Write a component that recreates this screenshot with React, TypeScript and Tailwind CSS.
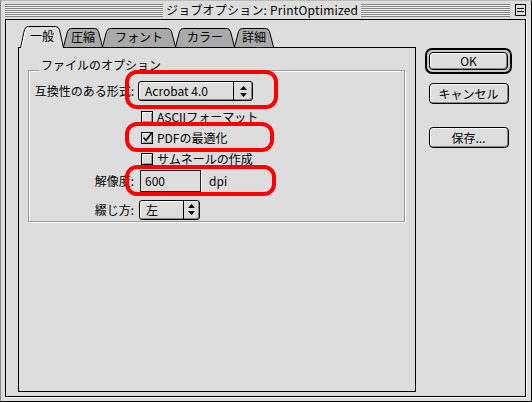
import React from "react";

const font = 'font-["Noto_Sans_CJK_JP",sans-serif]';

const tabs = [
  { label: "一般", w: 44, active: true },
  { label: "圧縮", w: 40 },
  { label: "フォント", w: 74 },
  { label: "カラー", w: 60 },
  { label: "詳細", w: 40 },
];

function Tab({ label, w, active, first }: { label: string; w: number; active?: boolean; first?: boolean }) {
  const h = active ? 22 : 19;
  const d = `M0.5 ${h} L4.5 3.5 Q5.5 0.5 8.5 0.5 L${w - 8.5} 0.5 Q${w - 5.5} 0.5 ${w - 4.5} 3.5 L${w - 0.5} ${h}`;
  return (
    <div
      className={`relative flex items-start justify-center ${first ? "" : "-ml-[1px]"} ${active ? "z-10 -mb-[1px] h-[22px] pt-[2px]" : "h-[19px] pt-[1px]"}`}
      style={{ width: w }}
    >
      <svg className="absolute inset-0" width={w} height={h}>
        <path d={d} fill={active ? "#dddddd" : "#a9a9a9"} stroke="#000" strokeWidth="1" />
        {active && <path d={`M1.8 ${h} L5.6 4 Q6.3 1.6 8.5 1.6`} fill="none" stroke="#fff" strokeWidth="1" />}
      </svg>
      <span className="relative whitespace-nowrap leading-[16px]">{label}</span>
    </div>
  );
}

function Popup({ text, w, arrowAt }: { text: string; w: number; arrowAt: number }) {
  return (
    <div
      className="flex h-[20px] items-center rounded-[3px] border border-black bg-[#dddddd] shadow-[inset_1px_1px_0_#fff,inset_-1px_-1px_0_#888]"
      style={{ width: w }}
    >
      <span className="whitespace-nowrap pl-[6px] leading-none" style={{ width: arrowAt }}>
        {text}
      </span>
      <div className="flex h-full flex-1 items-center justify-center border-l border-black">
        <svg width="7" height="11" viewBox="0 0 7 11">
          <polygon points="3.5,0 7,4 0,4" fill="#000" />
          <polygon points="0,7 7,7 3.5,11" fill="#000" />
        </svg>
      </div>
    </div>
  );
}

function Check({ label, checked }: { label: string; checked?: boolean }) {
  return (
    <div className="flex h-[21px] items-center">
      <span className="ml-[3px] relative h-[12px] w-[12px] border border-black bg-[#dddddd] shadow-[inset_1px_1px_0_#fff,inset_-1px_-1px_0_#999]">
        {checked && (
          <svg className="absolute left-[0px] top-[-1px]" width="11" height="11" viewBox="0 0 11 11">
            <path d="M1.5 5.5 L4 8.5 L9.5 1" fill="none" stroke="#000" strokeWidth="1.6" />
          </svg>
        )}
      </span>
      <span className="ml-[4px] whitespace-nowrap leading-none">{label}</span>
    </div>
  );
}

function Button({ label }: { label: string }) {
  return (
    <div className="flex h-[21px] w-[80px] items-center justify-center whitespace-nowrap rounded-[4px] border border-black bg-[#dddddd] leading-none shadow-[inset_1px_1px_0_#fff,inset_-1px_-1px_0_#888]">
      {label}
    </div>
  );
}

function Stripes({ className }: { className: string }) {
  return <div className={`h-[13px] bg-[repeating-linear-gradient(to_bottom,#868686_0px,#868686_1px,#eeeeee_1px,#eeeeee_2px)] ${className}`} />;
}

export default function App() {
  return (
    <div className={`${font} relative h-[402px] w-[532px] border-l border-t border-r border-b border-l-[#888] border-t-[#bbb] border-r-black border-b-black bg-[#dddddd] text-[12px] text-black`}>
      {/* タイトルバー */}
      <div className="flex h-[18px] items-center pl-[4px] pr-[5px]">
        <Stripes className="w-[158px]" />
        <span className="whitespace-nowrap px-[3px] leading-none tracking-[0.2px]">ジョブオプション: PrintOptimized</span>
        <Stripes className="flex-1" />
        <div className="ml-[5px] flex h-[12px] w-[11px] flex-col justify-center gap-[2px] border border-black bg-[#dddddd] px-[1px]">
          <div className="h-[1px] bg-black" />
          <div className="h-[1px] bg-black" />
        </div>
      </div>

      {/* 本体 */}
      <div className="ml-[4px] flex h-[378px] w-[521px] border border-black shadow-[1px_1px_0_#fff]">
        <div className="ml-[12px] mt-[6px] flex flex-col">
          <div className="ml-[2px] flex h-[21px] items-end">
            {tabs.map((t, i) => (
              <Tab key={t.label} label={t.label} w={t.w} active={t.active} first={i === 0} />
            ))}
          </div>
          <div className="h-[345px] w-[398px] border border-black">
            <div className="relative ml-[9px] mt-[22px] w-[377px] border border-[#999] pb-[2px] pl-[4px] shadow-[1px_1px_0_#fff,inset_1px_1px_0_#fff]">
              <span className="absolute left-[10px] top-[-13px] whitespace-nowrap bg-[#dddddd] px-[2px] leading-[14px]">ファイルのオプション</span>

              <div className="mt-[10px] flex h-[20px] items-center">
                <div className="w-[101px] whitespace-nowrap text-right leading-none">互換性のある形式:</div>
                <div className="ml-[4px]">
                  <Popup text="Acrobat 4.0" w={115} arrowAt={94} />
                </div>
              </div>

              <div className="mt-[5px] flex flex-col pl-[105px]">
                <Check label="ASCIIフォーマット" />
                <Check label="PDFの最適化" checked />
                <Check label="サムネールの作成" />
              </div>

              <div className="mt-[1px] flex h-[22px] items-center">
                <div className="w-[101px] whitespace-nowrap text-right leading-none">解像度:</div>
                <div className="ml-[6px] flex h-[22px] w-[61px] items-center border border-[#222] bg-[#dddddd] pl-[4px] leading-none shadow-[1px_1px_0_#fff]">
                  600
                </div>
                <span className="ml-[8px] leading-none">dpi</span>
              </div>

              <div className="mt-[8px] flex h-[19px] items-center">
                <div className="w-[101px] whitespace-nowrap text-right leading-none">綴じ方:</div>
                <div className="ml-[5px]">
                  <Popup text="左" w={61} arrowAt={43} />
                </div>
              </div>
            </div>
          </div>
        </div>

        {/* ボタン */}
        <div className="ml-[9px] mt-[28px] flex w-[87px] flex-col items-center">
          <div className="rounded-[7px] border-2 border-black bg-[#c8c8c8] p-[2px]">
            <div className="flex h-[18px] w-[79px] items-center justify-center rounded-[4px] border border-black bg-[#dddddd] leading-none shadow-[inset_1px_1px_0_#fff,inset_-1px_-1px_0_#888]">
              OK
            </div>
          </div>
          <div className="mt-[9px]">
            <Button label="キャンセル" />
          </div>
          <div className="mt-[23px]">
            <Button label="保存..." />
          </div>
        </div>
      </div>

      {/* 赤い注釈 */}
      <div className="absolute left-[124px] top-[69px] h-[39px] w-[153px] rounded-[12px] border-4 border-[#ff0000]" />
      <div className="absolute left-[124px] top-[121px] h-[30px] w-[149px] rounded-[12px] border-4 border-[#ff0000]" />
      <div className="absolute left-[124px] top-[164px] h-[31px] w-[151px] rounded-[12px] border-4 border-[#ff0000]" />
    </div>
  );
}
